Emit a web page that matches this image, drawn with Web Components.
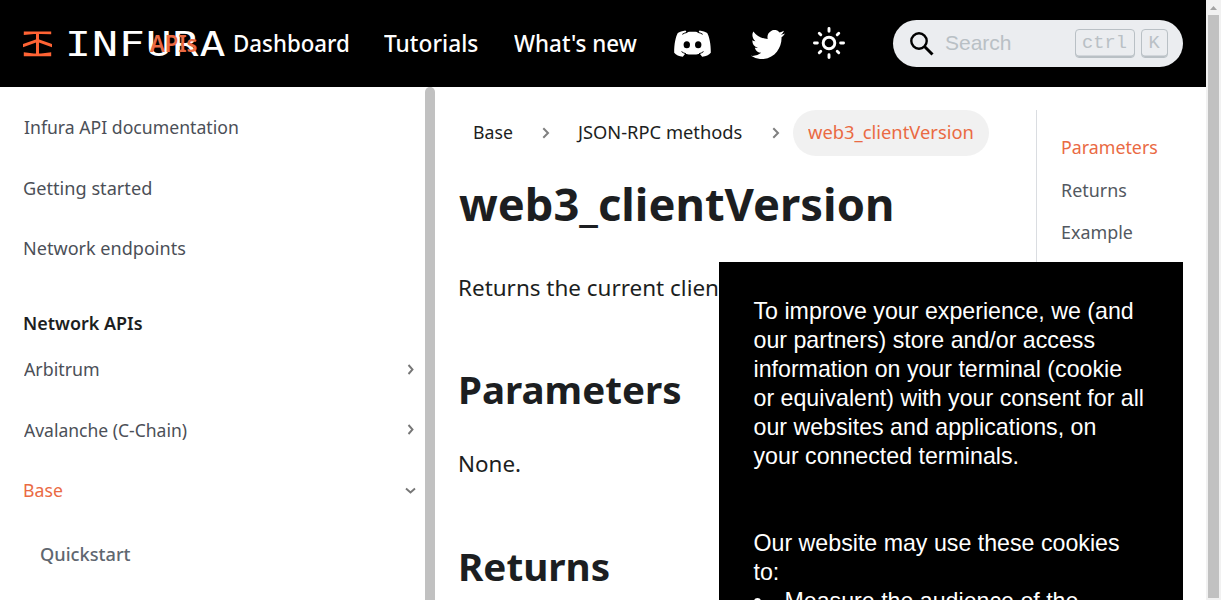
<!DOCTYPE html>
<html lang="en">
<head>
<meta charset="utf-8">
<title>web3_clientVersion | Infura documentation</title>
<style>
html,body{margin:0;height:100%;overflow:hidden;background:#fff;font-family:"Noto Sans","Open Sans",sans-serif}
</style>
</head>
<body>
<docs-app></docs-app>
<script>
const ctx = document.createElement('canvas').getContext('2d');
function define(name, html, after) {
  const t = document.createElement('template');
  t.innerHTML = html;
  customElements.define(name, class extends HTMLElement {
    constructor() {
      super();
      this.attachShadow({mode: 'open'}).append(t.content.cloneNode(true));
    }
    connectedCallback() { if (after) after.call(this, this.shadowRoot); }
  });
}

// One line of text whose ink is fitted to the width in "w"; "upto" limits the measured prefix.
define('fit-text', `<style>
:host{display:block;flex:none;white-space:nowrap}
span{display:inline-block;transform-origin:0 50%;white-space:pre}
</style><span></span>`, function (r) {
  const a = n => this.getAttribute(n);
  const size = +(a('size') || 18.4), weight = a('weight') || 400;
  const font = a('font') || '"Noto Sans"';
  const s = r.querySelector('span');
  const text = a('text'), w = +a('w');
  ctx.font = `${weight} ${size}px ${font}, sans-serif`;
  const m = ctx.measureText(a('upto') || text);
  const ink = m.actualBoundingBoxLeft + m.actualBoundingBoxRight;
  const k = w / ink;
  this.style.width = w + 'px';
  s.textContent = text;
  s.style.font = `${weight} ${size}px/${a('lh') || size * 1.4 + 'px'} ${font}, sans-serif`;
  s.style.transform = `translateX(${m.actualBoundingBoxLeft * k}px) scaleX(${k})`;
});

define('infura-logo', `<style>
:host{display:flex;align-items:center;width:127px;height:87px;flex:none}
svg{flex:none;display:block}
b{font:400 34.500px/40px "DejaVu Sans Mono",monospace;letter-spacing:.75px;color:#fff;transform:scaleX(1.25);transform-origin:0 50%;margin-left:12px}
</style>
<svg width="30" height="26" viewBox="0 0 30 26"><g fill="#ff6334"><path d="M.8 .4H28.200V3.200L18 3H11L.8 4Z"/><path d="M13 2H16V23H13Z"/><path d="M0 13 13.500 8.200H15.500L29 13V16.200L14.500 11 0 16.200Z"/><path d="M.8 21.200 11 22.500H18L28.200 21.200V25.300H.8Z"/></g></svg>
<b>INFURA</b>`);

define('social-icon', `<style>:host{display:block;flex:none}svg{display:block}</style><div></div>`, function (r) {
  const icons = {
    discord: `<svg width="37" height="27" viewBox="0 0 37 27"><path fill="#fff" d="M11.5 0.4C8.300 .8 5.500 1.700 3.800 3 1.800 6.500 0 14 .2 22.700 2 25 5 26.500 8.800 26.700L11.200 23.700C16 24.900 21 24.900 25.800 23.700L28.200 26.700C32 26.500 35 25 36.800 22.700 37 14 35.200 6.500 33.200 3 31.500 1.700 28.700 .8 25.500 .4L24.500 2.200C20.500 1.600 16.500 1.600 12.500 2.200Z"/><g fill="none" stroke="#000" stroke-width="1"><path d="M8.300 4.300Q10.500 2.800 13.500 2.300M28.700 4.300Q26.500 2.800 23.500 2.300M7.500 21.600Q9.500 23.100 12 23.800M29.500 21.600Q27.500 23.100 25 23.800"/></g><ellipse cx="12.800" cy="14.800" rx="3.200" ry="3.500"/><ellipse cx="24.200" cy="14.800" rx="3.200" ry="3.500"/></svg>`,
    twitter: `<svg width="34" height="29" viewBox="0 2.200 24 19.500" preserveAspectRatio="none"><path fill="#fff" d="M23.953 4.570a10 10 0 01-2.825.775 4.958 4.958 0 002.163-2.723c-.951.555-2.005.959-3.127 1.184a4.920 4.920 0 00-8.384 4.482C7.690 8.095 4.067 6.130 1.640 3.162a4.822 4.822 0 00-.666 2.475c0 1.710.870 3.213 2.188 4.096a4.904 4.904 0 01-2.228-.616v.060a4.923 4.923 0 003.946 4.827 4.996 4.996 0 01-2.212.085 4.936 4.936 0 004.604 3.417 9.867 9.867 0 01-6.102 2.105c-.390 0-.779-.023-1.170-.067a13.995 13.995 0 007.557 2.209c9.053 0 13.998-7.496 13.998-13.985 0-.210 0-.420-.015-.630A9.935 9.935 0 0024 4.590z"/></svg>`,
    sun: `<svg width="32" height="32" viewBox="1 1 22 22" fill="none" stroke="#fff" stroke-width="2" stroke-linecap="round"><circle cx="12" cy="12" r="4"/><path d="M2 12h2M20 12h2M12 2v2M12 20v2M5.300 5.300l1.050 1.050M18.700 5.300l-1.050 1.050M5.300 18.700l1.050-1.050M18.700 18.700l-1.050-1.050"/></svg>`
  };
  r.querySelector('div').innerHTML = icons[this.getAttribute('name')];
});

define('chevron-icon', `<style>:host{display:block;flex:none}svg{display:block}:host([down]) svg{transform:rotate(90deg)}</style>
<svg><path fill="none"/></svg>`, function (r) {
  const big = this.hasAttribute('big');
  const svg = r.querySelector('svg'), p = r.querySelector('path');
  svg.setAttribute('width', big ? 8 : 7); svg.setAttribute('height', big ? 12 : 11);
  p.setAttribute('d', big ? 'M1.300 1.300 6 6 1.300 10.700' : 'M1.500 1 5.500 5.500 1.500 10');
  p.setAttribute('stroke', big ? '#808080' : '#777'); p.setAttribute('stroke-width', big ? 2 : 1.900);
});

define('search-box', `<style>
:host{display:flex;align-items:center;box-sizing:border-box;width:290px;height:47px;border-radius:24px;background:#ebedf0;padding:0 15px 0 17px;flex:none}
svg{display:block;flex:none}
.q{font:21px/24px "Liberation Sans",sans-serif;color:#b9c0c5;margin-left:11.500px;flex:1;padding-bottom:2px}
kbd{box-sizing:border-box;height:29px;border:1px solid #b9c0c5;border-radius:4px;box-shadow:inset 0 -1.500px 0 #b9c0c5;color:#b9c0c5;font:18.700px/26px "Liberation Mono",monospace;text-align:center}
.c{width:60px;margin-right:6px}.k{width:27px}
</style>
<svg width="24" height="24" viewBox="0 0 24 24" fill="none" stroke="#000"><circle cx="9" cy="9" r="7.700" stroke-width="2.400"/><path d="M14.500 14.500 22.500 22.500" stroke-width="3"/></svg>
<span class="q">Search</span><kbd class="c">ctrl</kbd><kbd class="k">K</kbd>`);

define('top-bar', `<style>
:host{display:flex;align-items:center;height:87px;background:#000;color:#fff;padding-left:23px}
.apis{color:#ea6a43;position:relative;z-index:1}
.disc{margin-left:37px}.tw{margin-left:40px;padding-top:1px}.sun{margin-left:28px;padding-bottom:1px}search-box{margin-left:48px}
.t{margin-left:35.500px}.w{margin-left:36px}.d{margin-left:37.500px}
</style>
<infura-logo></infura-logo>
<fit-text class="apis" text="APIs" size="23.300" weight="600" w="47"></fit-text>
<fit-text class="d" text="Dashboard" size="23.300" weight="500" w="113.500"></fit-text>
<fit-text class="t" text="Tutorials" size="23.300" weight="500" w="94"></fit-text>
<fit-text class="w" text="What's new" size="23.300" weight="500" w="123"></fit-text>
<social-icon class="disc" name="discord"></social-icon>
<social-icon class="tw" name="twitter"></social-icon>
<social-icon class="sun" name="sun"></social-icon>
<search-box></search-box>`);

define('nav-row', `<style>
:host{display:flex;align-items:center;justify-content:space-between;height:60.400px;padding:0 11px 0 23.500px;color:#4b4f57}
</style><slot></slot>`);

define('side-nav', `<style>
:host{display:flex;width:435px;flex:none;overflow:hidden}
nav{flex:1;padding-top:10px}
.bar{width:10px;background:#c1c1c1;border-radius:5px 5px 0 0}
.head{height:61px;padding-top:0;margin-top:14px;margin-bottom:-14px;color:#1c1e21}
.on{color:#ea6a43}.sub{padding-left:41px;color:#606770;margin-top:3.500px}
</style>
<nav>
<nav-row><fit-text text="Infura API documentation" w="213.500"></fit-text></nav-row>
<nav-row><fit-text text="Getting started" w="127"></fit-text></nav-row>
<nav-row><fit-text text="Network endpoints" w="161"></fit-text></nav-row>
<nav-row class="head"><fit-text text="Network APIs" w="118.500" weight="600"></fit-text></nav-row>
<nav-row><fit-text text="Arbitrum" w="74.500"></fit-text><chevron-icon></chevron-icon></nav-row>
<nav-row><fit-text text="Avalanche (C-Chain)" w="162.500"></fit-text><chevron-icon></chevron-icon></nav-row>
<nav-row class="on"><fit-text text="Base" w="38.500"></fit-text><chevron-icon down></chevron-icon></nav-row>
<nav-row class="sub"><fit-text text="Quickstart" w="89.500" weight="500"></fit-text></nav-row>
</nav><div class="bar"></div>`);

define('bread-crumbs', `<style>
:host{display:flex;align-items:center;height:46px;color:#1c1e21}
fit-text{padding-bottom:2px}
.pill{display:flex;align-items:center;box-sizing:border-box;width:196px;height:46px;border-radius:23px;background:#f1f1f1;color:#ea6a43;padding-left:15px;margin-left:13px}
</style>
<fit-text text="Base" w="38.500" style="margin-left:15px"></fit-text>
<chevron-icon big style="margin-left:29.500px"></chevron-icon>
<fit-text text="JSON-RPC methods" w="165.500" style="margin-left:26px"></fit-text>
<chevron-icon big style="margin-left:30px"></chevron-icon>
<div class="pill"><fit-text text="web3_clientVersion" w="164.500"></fit-text></div>`);

define('doc-article', `<style>
:host{display:block;width:601px;flex:none;padding:23px 0 0 24px;box-sizing:border-box;color:#1c1e21}
h1,h2,p{margin:0;font-size:0}
h1{margin-top:17px}p{margin-top:36px}
.p{margin-left:2px}h2.p{margin-top:55px}p.n{margin-top:29px;margin-left:1px}h2.r{margin-top:56px}
</style>
<bread-crumbs></bread-crumbs>
<h1><fit-text text="web3_clientVersion" size="44.400" weight="700" lh="62px" w="432.500"></fit-text></h1>
<p style="margin-left:1px"><fit-text text="Returns the current client version." upto="Returns the current clien" size="22.600" lh="34px" w="258"></fit-text></p>
<h2 class="p"><fit-text text="Parameters" size="38" weight="700" lh="58px" w="219.500"></fit-text></h2>
<p class="n"><fit-text text="None." size="22.600" lh="34px" w="60"></fit-text></p>
<h2 class="p r"><fit-text text="Returns" size="38" weight="700" lh="58px" w="148"></fit-text></h2>`);

define('page-toc', `<style>
:host{display:block;flex:1;margin-top:23px}
div{border-left:1px solid #dadde1;padding:16px 0 0 25px;color:#525860;height:470px;box-sizing:border-box}
fit-text{height:42.500px}.on{color:#ea6a43}
</style>
<div><fit-text class="on" text="Parameters" lh="42px" w="95"></fit-text>
<fit-text text="Returns" lh="42px" w="64"></fit-text>
<fit-text text="Example" lh="42px" w="70.500"></fit-text></div>`);

define('cookie-notice', `<style>
:host{display:block;position:absolute;left:719px;top:262px;width:464px;height:338px;box-sizing:border-box;background:#000;color:#fff;padding:35px 34px 0 34.500px;overflow:hidden;font:23.200px/29px "Liberation Sans",sans-serif}
p{margin:0 0 58px}ul{margin:-58px 0 0;padding:0;list-style:none}
li{display:flex}
li::before{content:"";width:7px;height:7px;border-radius:50%;background:#fff;margin:11px 24px 0 0}
</style>
<p>To improve your experience, we (and<br>our partners) store and/or access<br>information on your terminal (cookie<br>or equivalent) with your consent for all<br>our websites and applications, on<br>your connected terminals.</p>
<p>Our website may use these cookies<br>to:</p>
<ul><li>Measure the audience of the</li></ul>`);

define('page-scroll', `<style>
:host{display:flex;flex-direction:column;align-items:center;width:15px;flex:none;background:#f1f1f1}
svg{display:block;height:15px}.th{width:11px;height:583px;background:#c1c1c1}
</style><svg width="15" height="15"><path d="M4 10 7.500 6 11 10Z" fill="#a3a3a3"/></svg><div class="th"></div>`);

define('docs-app', `<style>
:host{display:flex;height:600px;width:1221px;overflow:hidden;position:relative}
main{flex:1;min-width:0}
.cols{display:flex;height:513px;overflow:hidden}
</style>
<main><top-bar></top-bar><div class="cols"><side-nav></side-nav><doc-article></doc-article><page-toc></page-toc></div></main>
<page-scroll></page-scroll><cookie-notice></cookie-notice>`);
</script>
</body>
</html>
